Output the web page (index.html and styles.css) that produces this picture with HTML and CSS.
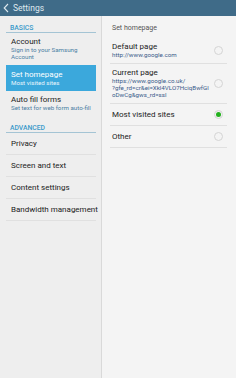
FILE: index.html
```html
<!DOCTYPE html>
<html>
<head>
<meta charset="utf-8">
<link rel="stylesheet" href="styles.css">
</head>
<body>
<div class="app">
  <header class="topbar">
    <svg class="back" width="6" height="10" viewBox="0 0 6 10"><path d="M5 1 L1.2 5 L5 9" fill="none" stroke="#dfe9ef" stroke-width="1.1"/></svg>
    <span class="title">Settings</span>
  </header>
  <div class="main">
    <nav class="side">
      <div class="sec">BASICS</div>
      <div class="item item-account">
        <div class="it">Account</div>
        <div class="is">Sign in to your Samsung Account</div>
      </div>
      <div class="item item-sel">
        <div class="it">Set homepage</div>
        <div class="is">Most visited sites</div>
      </div>
      <div class="item item-auto">
        <div class="it">Auto fill forms</div>
        <div class="is">Set text for web form auto-fill</div>
      </div>
      <div class="sec">ADVANCED</div>
      <div class="row">Privacy</div>
      <div class="row">Screen and text</div>
      <div class="row">Content settings</div>
      <div class="row">Bandwidth management</div>
    </nav>
    <section class="content">
      <div class="ctitle">Set homepage</div>
      <div class="opt">
        <div class="otext">
          <div class="ot">Default page</div>
          <div class="ou">http://www.google.com</div>
        </div>
        <span class="radio"></span>
      </div>
      <div class="opt">
        <div class="otext">
          <div class="ot">Current page</div>
          <div class="ou">https://www.google.co.uk/<br>?gfe_rd=cr&amp;ei=Xkl4VLO7HciqBwfGl<br>oDwCg&amp;gws_rd=ssl</div>
        </div>
        <span class="radio"></span>
      </div>
      <div class="opt opt-single">
        <div class="otext"><div class="ot">Most visited sites</div></div>
        <span class="radio on"></span>
      </div>
      <div class="opt opt-single">
        <div class="otext"><div class="ot">Other</div></div>
        <span class="radio"></span>
      </div>
    </section>
  </div>
</div>
</body>
</html>
```
FILE: styles.css
```css
* { box-sizing: border-box; }
html, body { margin: 0; padding: 0; }
body {
  width: 236px;
  height: 378px;
  overflow: hidden;
  font-family: Roboto, "Noto Sans", sans-serif;
  background: #f4f4f4;
}
.app { display: flex; flex-direction: column; height: 378px; }
.topbar {
  height: 16px;
  background: #3f6b88;
  display: flex;
  align-items: center;
  padding-left: 3px;
  gap: 4px;
}
.back { display: block; }
.title { color: #dfe9ef; font-size: 8.5px; line-height: 16px; }
.main { flex: 1; display: flex; }
.side {
  width: 102px;
  background: #eeeeee;
  border-right: 1px solid #d9d9d9;
  padding: 0 5px 0 6px;
}
.sec {
  padding: 8px 0 0 4px;
  line-height: 8px;
  font-size: 6.8px;
  font-weight: 500;
  color: #3a9acb;
  border-bottom: 1.5px solid #a4c4d4;
}
.item { padding: 4px 0 4px 5px; }
.it { font-size: 8px; line-height: 10px; color: #222; white-space: nowrap; }
.is { font-size: 6.2px; line-height: 6.5px; color: #4b7ea3; }
.item-account { padding-bottom: 5px; height: 32px; }
.item-sel { background: #3ba8dc; height: 26px; padding-top: 5px; }
.item-sel .it { color: #fff; }
.item-sel .is { color: #eaf6fc; line-height: 7px; }
.item-auto { height: 25px; }
.item-auto .is { line-height: 7px; white-space: nowrap; }
.row {
  height: 22px;
  line-height: 21px;
  padding-left: 5px;
  font-size: 8px;
  color: #222;
  white-space: nowrap;
  border-bottom: 1px solid #e0e0e0;
}
.content { flex: 1; padding: 0 9px 0 8px; }
.ctitle {
  padding: 7px 0 0 2px;
  line-height: 10px;
  font-size: 7px;
  color: #555;
  margin-bottom: 5px;
}
.opt {
  display: flex;
  align-items: center;
  padding: 4px 4px 4px 2px;
  border-bottom: 1px solid #e0e0e0;
}
.opt-single { height: 22px; padding-top: 0; padding-bottom: 0; }
.otext { flex: 1; }
.ot { font-size: 8px; line-height: 10px; color: #222; }
.ou { font-size: 6.2px; line-height: 7px; color: #3a5b8a; white-space: nowrap; }
.radio {
  width: 9px;
  height: 9px;
  border-radius: 50%;
  border: 1px solid #d4d4d4;
  display: flex;
  align-items: center;
  justify-content: center;
  flex-shrink: 0;
}
.radio.on::after {
  content: "";
  width: 5px;
  height: 5px;
  border-radius: 50%;
  background: #23b01e;
}
```
